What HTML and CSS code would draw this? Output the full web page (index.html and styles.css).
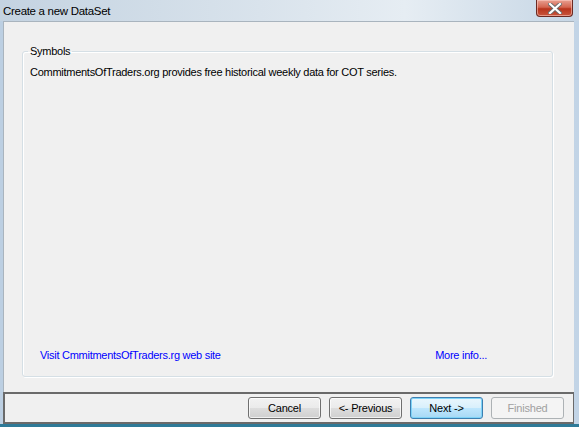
FILE: index.html
```html
<!DOCTYPE html>
<html>
<head>
<meta charset="utf-8">
<link rel="stylesheet" href="styles.css">
</head>
<body>
<div class="window">
  <div class="titlebar">
    <span class="title">Create a new DataSet</span>
    <div class="close">
      <svg width="14" height="11" viewBox="0 0 14 11">
        <path d="M2 1 L12 10 M12 1 L2 10" stroke="#6a6a6a" stroke-width="4" stroke-linecap="square"/>
        <path d="M2 1 L12 10 M12 1 L2 10" stroke="#ffffff" stroke-width="2.2" stroke-linecap="square"/>
      </svg>
    </div>
  </div>
  <div class="client">
    <div class="main">
      <fieldset class="group">
        <legend>Symbols</legend>
        <p class="desc">CommitmentsOfTraders.org provides free historical weekly data for COT series.</p>
        <div class="links">
          <a class="link">Visit CmmitmentsOfTraders.rg web site</a>
          <a class="link">More info...</a>
        </div>
      </fieldset>
    </div>
    <div class="footer">
      <button class="btn">Cancel</button>
      <button class="btn">&lt;- Previous</button>
      <button class="btn default">Next -&gt;</button>
      <button class="btn disabled">Finished</button>
    </div>
  </div>
  <div class="bottom"></div>
</div>
</body>
</html>
```
FILE: styles.css
```css
html, body {
  margin: 0;
  padding: 0;
}
body {
  width: 579px;
  height: 427px;
  overflow: hidden;
  font-family: "Liberation Sans", Arial, sans-serif;
  font-size: 11px;
  letter-spacing: -0.27px;
  color: #000;
}
.window {
  width: 579px;
  height: 427px;
  display: flex;
  flex-direction: column;
  background: linear-gradient(to right, #bccfe2, #d3e0ec 55%, #c2d4e6);
}
.titlebar {
  height: 21px;
  flex: none;
  display: flex;
  justify-content: space-between;
  align-items: flex-start;
  padding-left: 3px;
  background: linear-gradient(to right, #c4d3e1 0%, #d9e3ec 45%, #e6edf3 70%, #c6d6e5 100%);
}
.title {
  font-size: 11.5px;
  letter-spacing: -0.3px;
  line-height: 16px;
  margin-top: 3px;
  color: #000;
}
.close {
  width: 37px;
  height: 17px;
  margin-right: 6px;
  border: 1px solid #6b2a22;
  border-top: none;
  border-radius: 0 0 4px 4px;
  background: linear-gradient(#e8a091 0%, #d4654f 45%, #b8341c 55%, #c8563c 100%);
  box-shadow: inset 0 0 0 1px rgba(255, 210, 200, 0.55);
  display: flex;
  align-items: center;
  justify-content: center;
  box-sizing: border-box;
}
.client {
  flex: 1;
  display: flex;
  flex-direction: column;
  margin: 0 5px 0 3px;
}
.main {
  flex: 1;
  background: #f0f0f0;
  border-left: 1px solid #a9b4be;
  border-top: 1px solid #a9b4be;
  padding: 23px 21px 15px 18px;
  display: flex;
}
.group {
  flex: 1;
  margin: 0;
  padding: 8px 0 14px 7px;
  border: 1px solid #d5dfe5;
  border-radius: 3px;
  box-shadow: inset 1px 1px 0 #fff, 1px 1px 0 #fff;
  display: flex;
  flex-direction: column;
}
.group legend {
  padding: 0 2px;
  margin-left: -2px;
  font-size: 11px;
  line-height: 13px;
}
.desc {
  margin: 0;
  line-height: 13px;
}
.links {
  margin-top: auto;
  display: flex;
  justify-content: space-between;
  padding: 0 65px 0 10px;
}
.link {
  color: #0000ff;
  line-height: 13px;
}
.footer {
  height: 32px;
  flex: none;
  box-sizing: border-box;
  background: #f0f0f0;
  border: 2px solid #6a6a6a;
  border-right-width: 1px;
  display: flex;
  justify-content: flex-end;
  align-items: flex-start;
  gap: 8px;
  padding: 3px 9px 0 0;
}
.btn {
  width: 73px;
  height: 22px;
  box-sizing: border-box;
  font-family: "Liberation Sans", Arial, sans-serif;
  font-size: 11px;
  letter-spacing: -0.2px;
  color: #000;
  border: 1px solid #707070;
  border-radius: 3px;
  background: linear-gradient(#f2f2f2 0%, #ebebeb 48%, #dddddd 52%, #cfcfcf 100%);
  box-shadow: inset 0 0 0 1px rgba(255, 255, 255, 0.7);
  padding: 0;
}
.btn.default {
  border-color: #3c7fb1;
  background: linear-gradient(#eaf6fd 0%, #d9f0fc 48%, #bee6fd 52%, #a7d9f5 100%);
  box-shadow: inset 0 0 0 1px #7fd3f7;
}
.btn.disabled {
  border-color: #adb2b5;
  background: #f4f4f4;
  color: #a0a0a0;
  box-shadow: none;
}
.bottom {
  height: 3px;
  flex: none;
  background: #2e7a98;
}
```
